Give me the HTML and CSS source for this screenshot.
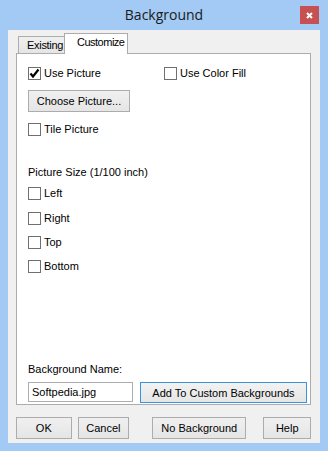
FILE: index.html
```html
<!DOCTYPE html>
<html>
<head>
<meta charset="utf-8">
<link rel="stylesheet" href="styles.css">
</head>
<body>
<div class="window">
  <div class="titlebar">
    <span></span>
    <span class="title">Background</span>
    <span class="close"><svg width="7" height="7" viewBox="0 0 7 7"><path d="M1 1 L6 6 M6 1 L1 6" stroke="#fff" stroke-width="2" fill="none"/></svg></span>
  </div>
  <div class="client">
    <div class="tabs">
      <div class="tab">Existing</div>
      <div class="tab active">Customize</div>
    </div>
    <div class="panel">
      <div class="row-two">
        <label class="check"><span class="box"><svg width="11" height="11" viewBox="0 0 11 11"><path d="M1.5 5.5 L4 8.5 L9.5 1.5" stroke="#000" stroke-width="2.2" fill="none"/></svg></span>Use Picture</label>
        <label class="check"><span class="box"></span>Use Color Fill</label>
      </div>
      <button class="btn choose">Choose Picture...</button>
      <label class="check tile"><span class="box"></span>Tile Picture</label>
      <div class="section-label">Picture Size (1/100 inch)</div>
      <label class="check s-left"><span class="box"></span>Left</label>
      <label class="check s-right"><span class="box"></span>Right</label>
      <label class="check s-next"><span class="box"></span>Top</label>
      <label class="check s-next"><span class="box"></span>Bottom</label>
      <div class="name-area">
        <div class="name-label">Background Name:</div>
        <div class="name-row">
          <div class="input">Softpedia.jpg</div>
          <button class="btn add">Add To Custom Backgrounds</button>
        </div>
      </div>
    </div>
    <div class="footer">
      <button class="btn ok">OK</button>
      <button class="btn cancel">Cancel</button>
      <button class="btn nobg">No Background</button>
      <button class="btn help">Help</button>
    </div>
  </div>
</div>
</body>
</html>
```
FILE: styles.css
```css
* { box-sizing: border-box; }
html, body { margin: 0; padding: 0; }
body {
  width: 328px;
  height: 451px;
  overflow: hidden;
  font-family: "Liberation Sans", Arial, sans-serif;
  font-size: 11px;
  color: #000;
}
.window {
  width: 328px;
  height: 451px;
  background: #a3caf4;
  display: flex;
  flex-direction: column;
}
.titlebar {
  height: 30px;
  display: grid;
  grid-template-columns: 1fr auto 1fr;
  align-items: start;
}
.title {
  font-family: "Open Sans", "Liberation Sans", sans-serif;
  font-size: 14px;
  line-height: 30px;
  color: #1a1a1a;
}
.close {
  justify-self: end;
  margin-top: 6px;
  margin-right: 9px;
  width: 19px;
  height: 18px;
  background: #c75050;
  display: flex;
  align-items: center;
  justify-content: center;
}
.close svg { display: block; }
.client {
  flex: 1;
  margin: 0 8px 8px 8px;
  background: #f0f0f0;
  padding: 0 9px 0 8px;
  display: flex;
  flex-direction: column;
}
.tabs {
  height: 23px;
  display: flex;
  align-items: flex-end;
  padding-left: 2px;
}
.tab {
  border: 1px solid #acacac;
  border-bottom: none;
  background: linear-gradient(#f0f0f0, #e5e5e5);
  height: 17px;
  width: 47px;
  padding-left: 8px;
  line-height: 16px;
  white-space: nowrap;
  overflow: hidden;
  letter-spacing: -0.3px;
}
.tab.active {
  background: #fff;
  height: 21px;
  width: 64px;
  margin-left: -1px;
  margin-bottom: -1px;
  padding-left: 12px;
  line-height: 17px;
  letter-spacing: -0.5px;
  position: relative;
}
.panel {
  height: 352px;
  background: #fff;
  border: 1px solid #acacac;
  padding: 0 0 1px 11px;
  display: flex;
  flex-direction: column;
  align-items: flex-start;
}
.row-two {
  margin-top: 13px;
  display: grid;
  grid-template-columns: 136px auto;
}
.check {
  display: flex;
  align-items: center;
  height: 13px;
  line-height: 13px;
  white-space: nowrap;
}
.box {
  width: 13px;
  height: 13px;
  border: 1px solid #707070;
  background: #fff;
  margin-right: 3px;
  display: flex;
  align-items: center;
  justify-content: center;
  flex: none;
}
.box svg { display: block; }
.btn {
  font-family: "Liberation Sans", Arial, sans-serif;
  font-size: 11px;
  color: #000;
  border: 1px solid #acacac;
  background: linear-gradient(#f0f0f0, #e5e5e5);
  height: 22px;
  padding: 0;
  margin: 0;
  text-align: center;
  white-space: nowrap;
}
.choose { margin-top: 10px; width: 102px; }
.tile { margin-top: 11px; }
.section-label { margin-top: 30px; line-height: 13px; }
.s-left { margin-top: 8px; }
.s-right { margin-top: 12px; }
.s-next { margin-top: 11px; }
.name-area { margin-top: auto; }
.name-label { line-height: 13px; }
.name-row {
  margin-top: 6px;
  display: flex;
  align-items: flex-start;
}
.input {
  width: 105px;
  height: 20px;
  border: 1px solid #abadb3;
  background: #fff;
  padding-left: 3px;
  line-height: 18px;
}
.add {
  margin-left: 7px;
  width: 167px;
  height: 21px;
  border-color: #3c92e0;
  background: linear-gradient(#f2f2f2, #e6e6e6);
}
.footer {
  margin-top: 12px;
  display: flex;
}
.ok { width: 56px; }
.cancel { width: 52px; margin-left: 6px; }
.nobg { width: 95px; margin-left: 23px; }
.help { width: 48px; margin-left: 17px; }
```
